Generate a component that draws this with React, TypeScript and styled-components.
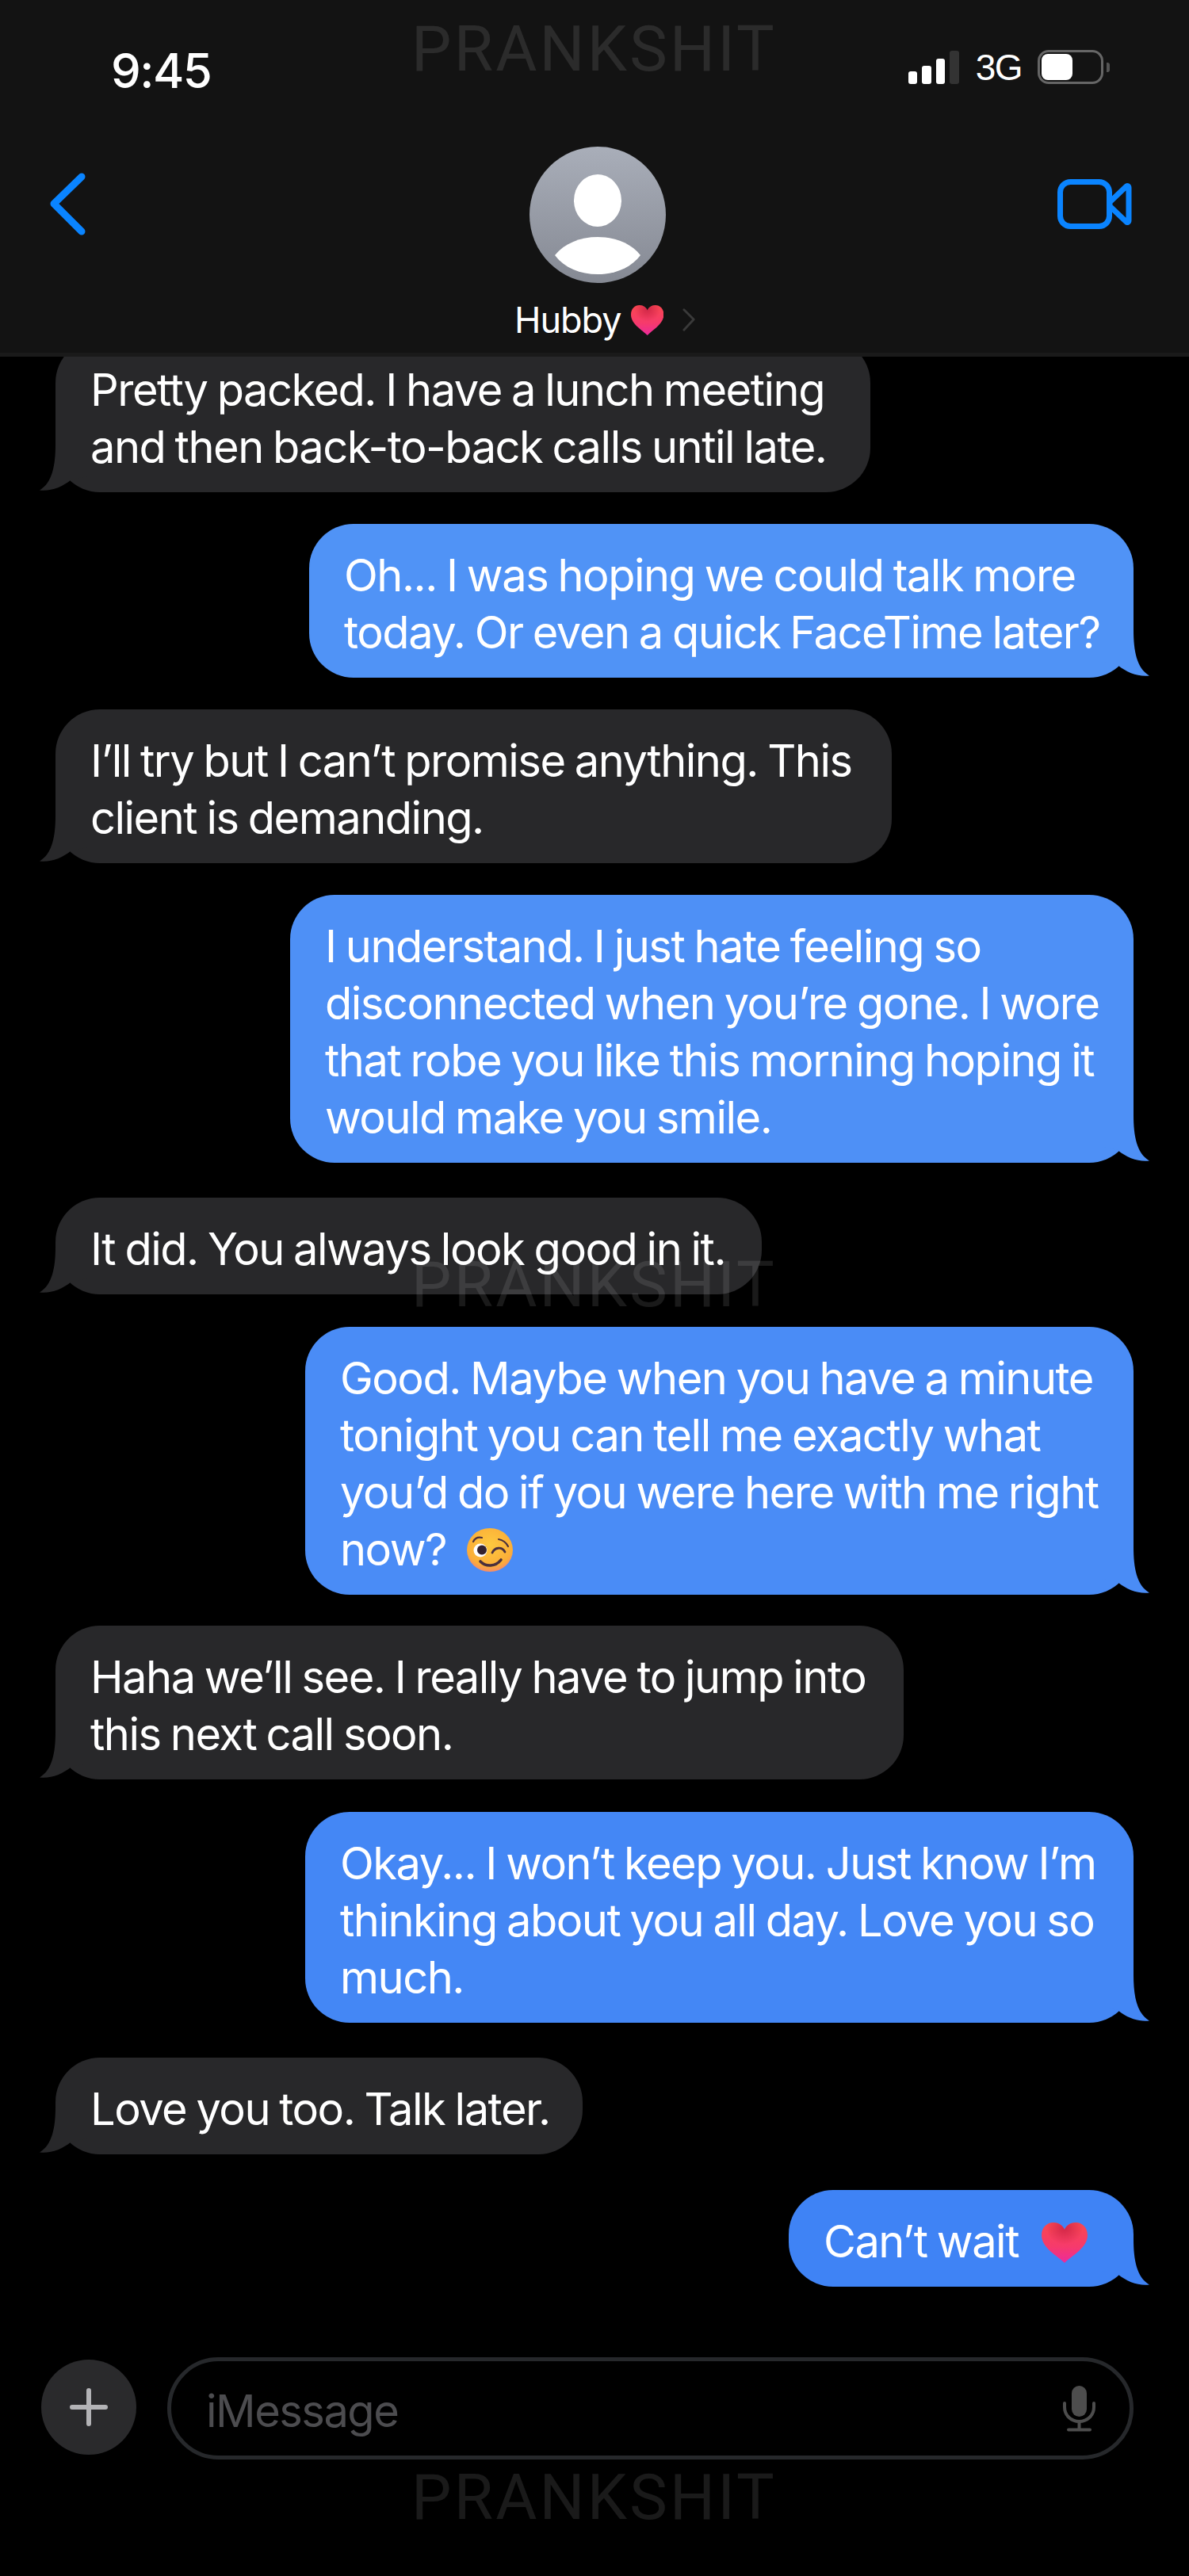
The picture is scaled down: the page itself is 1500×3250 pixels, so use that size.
import React, { useId } from "react";
import styled, { createGlobalStyle } from "styled-components";

const Global = createGlobalStyle`
  html, body { margin: 0; padding: 0; background: #000; }
  * { box-sizing: border-box; }
`;

const Screen = styled.div`
  position: relative;
  width: 1500px;
  height: 3250px;
  background: #000;
  display: flex;
  flex-direction: column;
  overflow: hidden;
  font-family: Inter, "Liberation Sans", sans-serif;
  color: #fff;
`;

const Header = styled.header`
  flex: none;
  height: 450px;
  background: #131313;
  border-bottom: 5px solid #1a1a1a;
  display: flex;
  flex-direction: column;
`;

const StatusBar = styled.div`
  height: 170px;
  flex: none;
  padding: 56px 108px 0 140px;
  display: flex;
  justify-content: space-between;
  align-items: flex-start;
`;

const Time = styled.div`
  font-size: 60px;
  line-height: 66px;
  font-weight: 500;
  letter-spacing: -1.5px;
`;

const StatusIcons = styled.div`
  display: flex;
  align-items: flex-end;
  margin-top: 8px;
  height: 42px;
`;

const Signal = styled.div`
  display: flex;
  align-items: flex-end;
  gap: 6px;
  height: 42px;
`;

const Bar = styled.span<{ $h: number; $off?: boolean }>`
  display: block;
  width: 11.5px;
  height: ${(p) => p.$h}px;
  border-radius: 3px;
  background: ${(p) => (p.$off ? "#333" : "#fff")};
`;

const Network = styled.span`
  font-size: 46px;
  line-height: 42px;
  margin: 0 20px 0 21px;
  letter-spacing: -1.5px;
  font-family: "Liberation Sans", Inter, sans-serif;
`;

const Battery = styled.div`
  position: relative;
  width: 83px;
  height: 43px;
  border: 3px solid #666;
  border-radius: 14px;
  padding: 2px;
  &::after {
    content: "";
    position: absolute;
    left: 84px;
    top: 13px;
    width: 4px;
    height: 12px;
    border-radius: 0 3px 3px 0;
    background: #555;
  }
`;

const BatteryFill = styled.div`
  width: 39px;
  height: 100%;
  background: #fff;
  border-radius: 8px;
`;

const Nav = styled.div`
  flex: 1;
  display: flex;
  align-items: flex-start;
  padding: 0 72px 0 60px;
`;

const BackIcon = styled.svg`
  flex: none;
  width: 52px;
  height: 88px;
  margin-top: 43px;
`;

const Contact = styled.div`
  margin-left: 540px;
  margin-top: 15px;
  width: 226px;
  display: flex;
  flex-direction: column;
`;

const Avatar = styled.svg`
  width: 172px;
  height: 172px;
  margin-left: 16px;
`;

const NameRow = styled.div`
  display: flex;
  align-items: center;
  margin-top: 22px;
  height: 50px;
`;

const Name = styled.span`
  font-size: 45px;
  line-height: 50px;
  letter-spacing: -1px;
  margin-left: -3px;
`;

const NameChevron = styled.svg`
  width: 18px;
  height: 32px;
  margin-left: 24px;
`;

const VideoIcon = styled.svg`
  margin-left: auto;
  margin-top: 52px;
  width: 100px;
  height: 70px;
`;

const Thread = styled.main`
  flex: 1;
  min-height: 0;
  overflow: hidden;
  display: flex;
  flex-direction: column;
  justify-content: flex-end;
  padding: 0 70px 89px;
`;

const Row = styled.div<{ $mine: boolean; $gap: number }>`
  flex: none;
  display: flex;
  justify-content: ${(p) => (p.$mine ? "flex-end" : "flex-start")};
  margin-top: ${(p) => p.$gap}px;
`;

const Bubble = styled.div<{ $tone: string; $width: number }>`
  position: relative;
  width: ${(p) => p.$width}px;
  padding: 29px 0 21px 44px;
  border-radius: 56px;
  background: ${(p) => p.$tone};
  font-size: 56px;
  line-height: 72px;
  letter-spacing: -1.5px;
  word-spacing: -2px;
  white-space: nowrap;
`;

const Tail = styled.svg<{ $mine: boolean }>`
  position: absolute;
  bottom: 0;
  width: 60px;
  height: 60px;
  ${(p) => (p.$mine ? "right: -20px; transform: scaleX(-1);" : "left: -20px;")}
`;

const InlineArt = styled.svg<{ $left: number; $drop: number }>`
  display: inline-block;
  vertical-align: ${(p) => p.$drop}px;
  margin-left: ${(p) => p.$left}px;
`;

const HeartInName = styled.svg`
  width: 44px;
  height: 38px;
  margin-left: 12px;
`;

const Composer = styled.footer`
  flex: none;
  height: 276px;
  padding: 0 70px 147px 52px;
  display: flex;
  align-items: center;
  gap: 39px;
`;

const PlusButton = styled.div`
  flex: none;
  width: 120px;
  height: 120px;
  margin-bottom: 3px;
  border-radius: 50%;
  background: #2a2a2c;
  display: flex;
  align-items: center;
  justify-content: center;
`;

const Field = styled.div`
  flex: 1;
  height: 129px;
  border: 5px solid #26282b;
  border-radius: 65px;
  padding: 0 43px 0 44px;
  display: flex;
  align-items: center;
  justify-content: space-between;
`;

const Placeholder = styled.span`
  font-size: 56px;
  line-height: 72px;
  letter-spacing: -1.5px;
  color: #4c4c4f;
  padding-top: 7px;
`;

const Watermark = styled.div<{ $top: number }>`
  position: absolute;
  left: 519px;
  top: ${(p) => p.$top}px;
  font-family: Roboto, sans-serif;
  font-size: 80px;
  line-height: 58px;
  font-weight: 400;
  letter-spacing: 3.2px;
  color: rgba(255, 255, 255, 0.1);
  pointer-events: none;
`;

const HEART =
  "M29 51C20 42 0 32 0 16C0 6 7 0 15 0C22 0 27 4 29 9C31 4 36 0 43 0C51 0 58 6 58 16C58 32 38 42 29 51Z";

function HeartArt() {
  const id = useId();
  return (
    <>
      <defs>
        <linearGradient id={`${id}a`} x1="0" y1="0" x2="0" y2="1">
          <stop offset="0" stopColor="#f9484f" />
          <stop offset="0.6" stopColor="#f63a6c" />
          <stop offset="1" stopColor="#ec2a9c" />
        </linearGradient>
        <radialGradient id={`${id}b`} cx="0.5" cy="0.14" r="0.4">
          <stop offset="0" stopColor="#c81f45" stopOpacity="0.8" />
          <stop offset="1" stopColor="#c81f45" stopOpacity="0" />
        </radialGradient>
      </defs>
      <path d={HEART} fill={`url(#${id}a)`} />
      <path d={HEART} fill={`url(#${id}b)`} />
    </>
  );
}

function WinkFace() {
  const id = useId();
  return (
    <InlineArt $left={26} $drop={-8} width="58" height="55" viewBox="0 0 58 55">
      <defs>
        <radialGradient id={id} cx="0.5" cy="0.38" r="0.66">
          <stop offset="0" stopColor="#fdc93f" />
          <stop offset="0.75" stopColor="#fbae38" />
          <stop offset="1" stopColor="#f3807a" />
        </radialGradient>
      </defs>
      <ellipse cx="29" cy="27.5" rx="29" ry="27.5" fill={`url(#${id})`} />
      <circle cx="17" cy="28" r="8.5" fill="#fff" />
      <circle cx="19" cy="27.5" r="6" fill="#33222f" />
      <g fill="none" stroke="#4a2f3d" strokeWidth="2.2" strokeLinecap="round">
        <path d="M8 17C10 13 14 11 19 12" />
        <path d="M40 14C46 15 50 19 52 23" />
        <path d="M32 31C35 24 44 23 48 30" strokeWidth="2.8" />
        <path d="M17 42C24 49 36 49 43 40" strokeWidth="3.6" />
      </g>
    </InlineArt>
  );
}

type Message = { mine: boolean; tone: string; gap: number; width: number; lines: React.ReactNode[] };

const DARK = "#28282a";

const messages: Message[] = [
  { mine: false, tone: DARK, gap: 0, width: 1028, lines: ["Pretty packed. I have a lunch meeting", "and then back-to-back calls until late."] },
  { mine: true, tone: "#5093f6", gap: 40, width: 1040, lines: ["Oh... I was hoping we could talk more", "today. Or even a quick FaceTime later?"] },
  { mine: false, tone: DARK, gap: 40, width: 1055, lines: ["I’ll try but I can’t promise anything. This", "client is demanding."] },
  { mine: true, tone: "#4e90f6", gap: 40, width: 1064, lines: ["I understand. I just hate feeling so", "disconnected when you’re gone. I wore", "that robe you like this morning hoping it", "would make you smile."] },
  { mine: false, tone: DARK, gap: 44, width: 891, lines: ["It did. You always look good in it."] },
  { mine: true, tone: "#4a8cf6", gap: 41, width: 1045, lines: ["Good. Maybe when you have a minute", "tonight you can tell me exactly what", "you’d do if you were here with me right", <>now?<WinkFace /></>] },
  { mine: false, tone: DARK, gap: 39, width: 1070, lines: ["Haha we’ll see. I really have to jump into", "this next call soon."] },
  { mine: true, tone: "#4487f5", gap: 41, width: 1045, lines: ["Okay... I won’t keep you. Just know I’m", "thinking about you all day. Love you so", "much."] },
  { mine: false, tone: DARK, gap: 44, width: 665, lines: ["Love you too. Talk later."] },
  {
    mine: true,
    tone: "#3f83f5",
    gap: 45,
    width: 435,
    lines: [
      <>
        Can’t wait
        <InlineArt $left={29} $drop={-7} width="58" height="51" viewBox="0 0 58 51">
          <HeartArt />
        </InlineArt>
      </>,
    ],
  },
];

export default function App() {
  return (
    <Screen>
      <Global />
      <Header>
        <StatusBar>
          <Time>9:45</Time>
          <StatusIcons>
            <Signal>
              <Bar $h={16} />
              <Bar $h={23} />
              <Bar $h={32} />
              <Bar $h={42} $off />
            </Signal>
            <Network>3G</Network>
            <Battery>
              <BatteryFill />
            </Battery>
          </StatusIcons>
        </StatusBar>
        <Nav>
          <BackIcon viewBox="0 0 52 88">
            <path d="M43 10L8 44L43 79" fill="none" stroke="#0a84ff" strokeWidth="9" strokeLinecap="round" strokeLinejoin="round" />
          </BackIcon>
          <Contact>
            <Avatar viewBox="0 0 172 172">
              <defs>
                <linearGradient id="avatarFill" x1="0" y1="0" x2="0" y2="1">
                  <stop offset="0" stopColor="#a9aeb9" />
                  <stop offset="1" stopColor="#858993" />
                </linearGradient>
              </defs>
              <circle cx="86" cy="86" r="86" fill="url(#avatarFill)" />
              <ellipse cx="86" cy="68" rx="30" ry="33" fill="#fff" />
              <path d="M32 137C44 122 64 114 86 114C108 114 128 122 140 137C128 153 108 161 86 161C64 161 44 153 32 137Z" fill="#fff" />
            </Avatar>
            <NameRow>
              <Name>Hubby</Name>
              <HeartInName viewBox="0 0 58 51" preserveAspectRatio="none">
                <HeartArt />
              </HeartInName>
              <NameChevron viewBox="0 0 18 32">
                <path d="M2 2L15 15L2 29" fill="none" stroke="#3a3a3a" strokeWidth="3" strokeLinecap="round" strokeLinejoin="round" />
              </NameChevron>
            </NameRow>
          </Contact>
          <VideoIcon viewBox="0 0 100 70">
            <rect x="9.5" y="7.5" width="62" height="56" rx="13" fill="none" stroke="#0a84ff" strokeWidth="7" />
            <path d="M72 33L93 13C94 12 96 12.5 96 15V56C96 58.5 94 59 93 58L72 38Z" fill="none" stroke="#0a84ff" strokeWidth="7" strokeLinejoin="round" />
          </VideoIcon>
        </Nav>
      </Header>
      <Thread>
        {messages.map((m, i) => (
          <Row key={i} $mine={m.mine} $gap={m.gap}>
            <Bubble $tone={m.tone} $width={m.width}>
              <Tail $mine={m.mine} viewBox="0 0 60 60">
                <path d="M20 0C20 26 16 48 0 57.5C14 59 28 54 40 44L60 40V0Z" fill={m.tone} />
              </Tail>
              {m.lines.map((line, j) => (
                <React.Fragment key={j}>
                  {j > 0 && <br />}
                  {line}
                </React.Fragment>
              ))}
            </Bubble>
          </Row>
        ))}
      </Thread>
      <Composer>
        <PlusButton>
          <svg width="48" height="48" viewBox="0 0 48 48">
            <path d="M24 3V45M3 24H45" stroke="#b3b3b6" strokeWidth="6" strokeLinecap="round" />
          </svg>
        </PlusButton>
        <Field>
          <Placeholder>iMessage</Placeholder>
          <svg width="41" height="58" viewBox="0 0 41 58">
            <rect x="11" y="0" width="19" height="39" rx="9.5" fill="#4d4d4d" />
            <path d="M2 22V27C2 37 10 45 20.5 45C31 45 39 37 39 27V22" fill="none" stroke="#4d4d4d" strokeWidth="4" strokeLinecap="round" />
            <path d="M20.5 45V55M7 55.5H34" fill="none" stroke="#4d4d4d" strokeWidth="4" strokeLinecap="round" />
          </svg>
        </Field>
      </Composer>
      <Watermark $top={33}>PRANKSHIT</Watermark>
      <Watermark $top={1592}>PRANKSHIT</Watermark>
      <Watermark $top={3122}>PRANKSHIT</Watermark>
    </Screen>
  );
}
